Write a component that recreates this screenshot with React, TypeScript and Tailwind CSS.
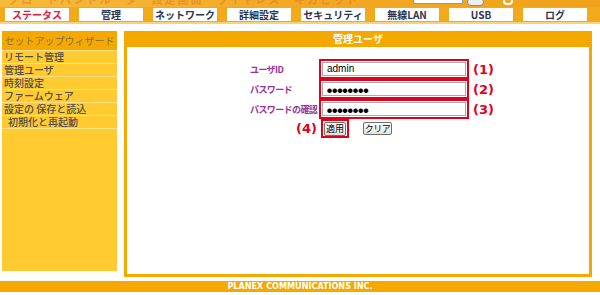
import React from 'react'

const navItems = ['ステータス', '管理', 'ネットワーク', '詳細設定', 'セキュリティ', '無線LAN', 'USB', 'ログ']

const sideItems = ['リモート管理', '管理ユーザ', '時刻設定', 'ファームウェア', '設定の 保存と読込', '初期化と再起動']

const jp = { fontFamily: '"Noto Sans CJK JP", "Liberation Sans", sans-serif' }

const FieldRow = ({ label, value, mark, secret }: { label: string; value: string; mark: string; secret?: boolean }) => (
  <div className="flex items-center h-[20px]">
    <div className="w-[69px] text-[9px] font-bold text-[#993399] leading-none whitespace-nowrap tracking-[-0.6px]">{label}</div>
    <div className="w-[150px] h-[20px] border-2 border-[#e0001b] flex items-center pl-[1px]">
      <div className="w-[144px] h-[14px] bg-white border border-[#a5acb5] flex items-center pl-[4px] text-black">
        {secret ? (
          <span className="text-[5px] leading-none tracking-[0.2px]">●●●●●●●●</span>
        ) : (
          <span className="text-[10px] leading-none" style={{ fontFamily: '"Liberation Sans", sans-serif' }}>{value}</span>
        )}
      </div>
    </div>
    <div className="ml-[4px] text-[13px] font-bold text-[#e0001b] leading-none" style={{ fontFamily: '"DejaVu Sans", sans-serif' }}>{mark}</div>
  </div>
)

export default function App() {
  return (
    <div className="w-[600px] h-[295px] bg-white flex flex-col overflow-hidden" style={jp}>
      {/* banner strip */}
      <div className="h-[7px] relative overflow-hidden bg-gradient-to-r from-[#f6bb3a] via-[#f2a825] to-[#f0a21a]">
        <div className="absolute -top-[9px] left-[8px] text-[11px] font-bold text-[#e2622a] opacity-40 whitespace-nowrap tracking-[2px]">
          ブロードバンドルータ　設定画面　ワイヤレス　ギガビット
        </div>
        <div className="absolute -top-[2px] left-[413px] w-[50px] h-[6px] bg-white border border-[#7f9db9]" />
        <div className="absolute -top-[2px] left-[467px] w-[17px] h-[8px] bg-[#eeeeee] border border-[#888] rounded-sm" />
        <div className="absolute -top-[3px] left-[503px] w-[10px] h-[8px] rounded-full border-2 border-white" />
      </div>

      {/* nav */}
      <div className="h-[15px] bg-[#f1aa1e] flex items-start pt-[1px] pl-[5px] gap-[10px]">
        {navItems.map((item, i) => (
          <div
            key={item}
            className={`w-[64px] h-[13px] bg-white flex items-center justify-center text-[10px] font-bold leading-none ${
              i === 0 ? 'text-[#e8193c]' : 'text-[#2b3550]'
            }`}
          >
            {item}
          </div>
        ))}
      </div>
      <div className="h-[2px] bg-[#f9d27a]" />
      <div className="h-[7px]" />

      {/* main */}
      <div className="flex items-start">
        <div className="ml-[2px] w-[115px] h-[240px] bg-[#ffcb30] flex flex-col">
          <div className="h-[19px] bg-[#f5a800] flex items-center justify-center text-[10px] text-[#85704c] leading-none">
            セットアップウィザード
          </div>
          {sideItems.map((item, i) => (
            <div
              key={item}
              className={`h-[13px] overflow-hidden border-t border-[#ffe38a] flex items-center text-[10px] font-medium text-[#4d4d4d] leading-[10px] whitespace-nowrap ${
                i === 5 ? 'pl-[6px]' : 'pl-[2px]'
              }`}
            >
              {item}
            </div>
          ))}
          <div className="border-t border-[#ffe38a]" />
        </div>

        <div className="ml-[7px] w-[468px] h-[246px] bg-[#f5a800] flex flex-col px-[3px] pb-[3px]">
          <div className="h-[16px] flex items-center justify-center text-[10px] font-bold text-white leading-none">管理ユーザ</div>
          <div className="flex-1 bg-white pt-[12px] pl-[123px] flex flex-col">
            <FieldRow label="ユーザID" value="admin" mark="(1)" />
            <FieldRow label="パスワード" value="" mark="(2)" secret />
            <FieldRow label="パスワードの確認" value="" mark="(3)" secret />
            <div className="flex items-center h-[19px]">
              <div className="w-[69px] flex justify-end pr-[2px] text-[13px] font-bold text-[#e0001b] leading-none" style={{ fontFamily: '"DejaVu Sans", sans-serif' }}>
                (4)
              </div>
              <div className="ml-[2px] w-[28px] h-[19px] border-2 border-[#e0001b] flex items-center justify-center">
                <div className="w-[22px] h-[14px] bg-gradient-to-b from-white to-[#e2e2dc] border border-[#6f6f6f] rounded-[2px] flex items-center justify-center text-[9px] leading-none text-black whitespace-nowrap">
                  適用
                </div>
              </div>
              <div className="ml-[14px] w-[29px] h-[13px] bg-gradient-to-b from-white to-[#e2e2dc] border border-[#6f6f6f] rounded-[2px] flex items-center justify-center text-[9px] leading-none text-black whitespace-nowrap tracking-[-0.5px]">
                クリア
              </div>
            </div>
          </div>
        </div>
      </div>

      <div className="h-[4px]" />
      <div className="h-[11px] bg-[#f5a800] flex items-center justify-center text-[9px] font-bold text-white leading-none" style={{ fontFamily: '"DejaVu Sans Condensed", "DejaVu Sans", sans-serif' }}>
        PLANEX COMMUNICATIONS INC.
      </div>
    </div>
  )
}
